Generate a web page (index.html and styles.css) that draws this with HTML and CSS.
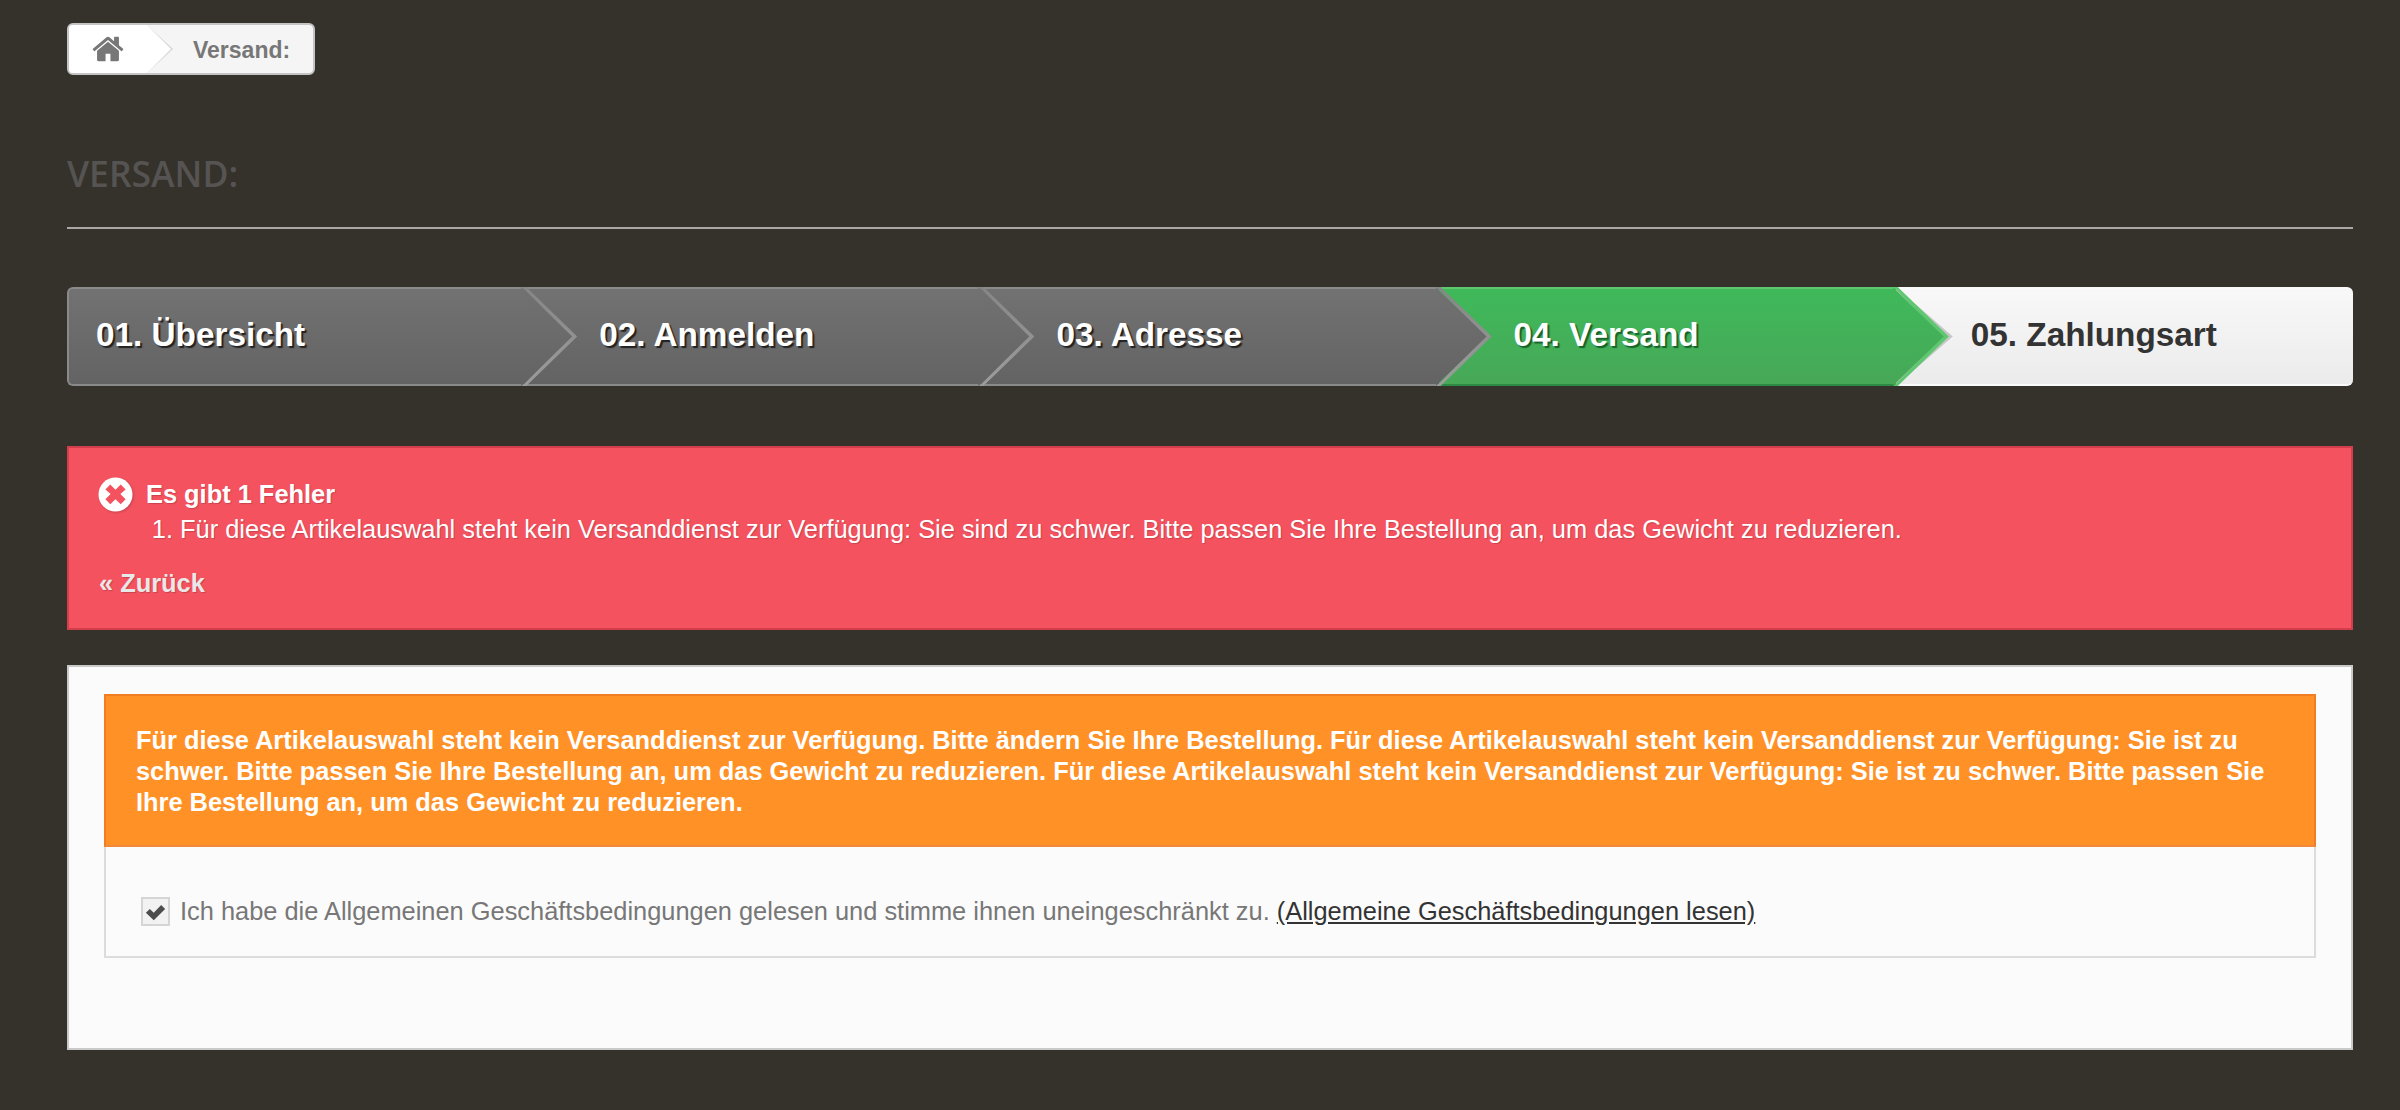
FILE: index.html
```html
<!DOCTYPE html>
<html lang="de">
<head>
<meta charset="utf-8">
<title>Versand</title>
<link rel="stylesheet" href="styles.css">
</head>
<body>
<main class="page">
  <nav class="crumb">
    <a class="crumb-home" href="#" aria-label="Start">
      <svg class="home-icon" viewBox="0 0 1792 1792"><path d="M1472 992v480q0 26-19 45t-45 19h-384v-384h-256v384h-384q-26 0-45-19t-19-45v-480q0-1 .5-3t.5-3l575-474 575 474q1 2 1 6zm223-69l-62 74q-8 9-21 11h-3q-13 0-21-7l-692-577-692 577q-12 8-24 7-13-2-21-11l-62-74q-8-10-7-23.500t11-21.500l719-599q32-26 76-26t76 26l244 204v-195q0-14 9-23t23-9h192q14 0 23 9t9 23v408l219 182q10 8 11 21.500t-7 23.500z"/></svg>
    </a>
    <span class="crumb-current">Versand:</span>
  </nav>

  <h1 class="title">VERSAND:</h1>

  <ol class="steps">
    <li class="step step-done step-first">01. Übersicht</li>
    <li class="step step-done step-second">02. Anmelden</li>
    <li class="step step-done step-third">03. Adresse</li>
    <li class="step step-current">04. Versand</li>
    <li class="step step-todo">05. Zahlungsart</li>
  </ol>

  <section class="alert">
    <div class="alert-head">
      <svg class="alert-icon" viewBox="0 0 36 36"><circle cx="18" cy="18" r="17.500" fill="#fff"/><path d="M12.600 7.800 18 13.200l5.400-5.400 5 5-5.400 4.800 5.400 5.400-5 5-5.400-5.200-5.400 5.200-5-5 5.400-5.400-5.400-4.800z" fill="#f4525f"/></svg>
      <strong>Es gibt 1 Fehler</strong>
    </div>
    <ol class="alert-list"><li>Für diese Artikelauswahl steht kein Versanddienst zur Verfügung: Sie sind zu schwer. Bitte passen Sie Ihre Bestellung an, um das Gewicht zu reduzieren.</li></ol>
    <a class="alert-back" href="#">« Zurück</a>
  </section>

  <section class="panel">
    <p class="warning">Für diese Artikelauswahl steht kein Versanddienst zur Verfügung. Bitte ändern Sie Ihre Bestellung. Für diese Artikelauswahl steht kein Versanddienst zur Verfügung: Sie ist zu schwer. Bitte passen Sie Ihre Bestellung an, um das Gewicht zu reduzieren. Für diese Artikelauswahl steht kein Versanddienst zur Verfügung: Sie ist zu schwer. Bitte passen Sie Ihre Bestellung an, um das Gewicht zu reduzieren.</p>
    <div class="terms">
      <span class="check">
        <svg class="check-icon" viewBox="0 0 24 24"><path d="M1 13.500 5.500 9l4.500 4.500L18.500 4.500l4.500 4.500L10 22z"/></svg>
      </span>
      <span class="terms-text">Ich habe die Allgemeinen Geschäftsbedingungen gelesen und stimme ihnen uneingeschränkt zu. <a class="terms-link" href="#">(Allgemeine Geschäftsbedingungen lesen)</a></span>
    </div>
  </section>
</main>
</body>
</html>
```

FILE: styles.css
```css
* { box-sizing: border-box; }

html, body {
  margin: 0;
  height: 100%;
  overflow: hidden;
}

body {
  background: #35312b;
  font-family: "Liberation Sans", Arial, sans-serif;
}

.page {
  padding: 23px 47px 0 67px;
}

/* Breadcrumb */
.crumb {
  display: flex;
  width: 248px;
  height: 52px;
  background: #f5f5f5;
  border: 2px solid #c4c4c4;
  border-radius: 6px;
  overflow: hidden;
}

.crumb-home {
  position: relative;
  display: flex;
  align-items: center;
  width: 79px;
  padding-left: 22px;
  background: #fff;
}

.crumb-home::before,
.crumb-home::after {
  content: "";
  position: absolute;
  top: 0;
  height: 100%;
  clip-path: polygon(0 0, 100% 50%, 0 100%);
}

.crumb-home::before {
  left: 78px;
  width: 26px;
  background: #d6d6d6;
}

.crumb-home::after {
  left: 78px;
  width: 24px;
  background: #fff;
}

.home-icon {
  width: 34px;
  height: 34px;
  fill: #777;
}

.crumb-current {
  margin-left: 45px;
  font-size: 23px;
  font-weight: 700;
  line-height: 50px;
  color: #777;
}

/* Title */
.title {
  margin: 74px 0 0;
  height: 80px;
  font-family: "Open Sans", sans-serif;
  font-size: 35.500px;
  font-weight: 600;
  line-height: 48px;
  color: #555452;
  border-bottom: 2px solid #a9a8a6;
}

/* Steps */
.steps {
  display: flex;
  margin: 58px 0 0;
  padding: 0;
  list-style: none;
}

.step {
  position: relative;
  flex: none;
  width: 20%;
  height: 99px;
  padding-left: 75px;
  font-size: 33.300px;
  font-weight: 700;
  line-height: 91px;
  border-top: 2px solid #8a8a8a;
  border-bottom: 2px solid #8a8a8a;
  white-space: nowrap;
}

.step-first {
  z-index: 5;
  padding-left: 27px;
  border-left: 2px solid #8a8a8a;
  border-radius: 6px 0 0 6px;
}

.step-second { z-index: 4; }
.step-third { z-index: 3; }

.step-done {
  color: #fff;
  background: linear-gradient(#727272, #636363);
  text-shadow: 2px 2px 1px #222;
}

.step-current {
  z-index: 2;
  color: #fff;
  background: linear-gradient(#3fb95a, #47a858);
  border-color: #5ec770;
  border-bottom-color: #2c8a44;
  text-shadow: 2px 2px 1px #17612b;
}

.step-todo {
  z-index: 1;
  color: #333;
  background: linear-gradient(#f8f8f8, #ebebeb);
  border-color: #fafafa;
  border-radius: 0 6px 6px 0;
}

/* Arrow: ::before draws the edge of the chevron, ::after its filling. */
.step-done::before,
.step-done::after,
.step-current::before,
.step-current::after {
  content: "";
  position: absolute;
  top: -2px;
  height: 99px;
}

.step-done::before,
.step-current::before {
  left: 100%;
  width: 55px;
  margin-left: -2px;
  clip-path: polygon(0 0, 4px 0, 100% 50%, 4px 100%, 0 100%, 49px 50%);
}

.step-done::after,
.step-current::after {
  left: 100%;
  width: 51px;
  margin-left: -3px;
  clip-path: polygon(0 0, 100% 50%, 0 100%);
}

.step-done::before {
  background: linear-gradient(#868686, #9c9c9c);
}

.step-done::after {
  background: linear-gradient(#727272, #636363);
}

.step-current::before {
  background: #5ec770;
}

.step-current::after {
  background: linear-gradient(#3fb95a, #47a858);
}

/* Grey edge that the green arrow leaves on the last step */
.step-todo::before {
  content: "";
  position: absolute;
  top: -2px;
  left: 0;
  width: 57px;
  height: 99px;
  background: #c6c6c6;
  clip-path: polygon(0 0, 100% 50%, 0 100%);
}

/* Error message */
.alert {
  height: 184px;
  margin-top: 60px;
  padding: 29px 30px 0;
  color: #fff;
  background: #f4525f;
  border: 2px solid #d23e4b;
  text-shadow: 1px 1px 1px rgba(0, 0, 0, .18);
}

.alert-head {
  display: flex;
  align-items: center;
  gap: 13px;
  height: 35px;
  font-size: 25.400px;
}

.alert-icon {
  flex: none;
  width: 35px;
  height: 35px;
  margin-left: -1px;
  filter: drop-shadow(1px 1px 1px rgba(0, 0, 0, .18));
}

.alert-list {
  margin: 0;
  padding: 0 0 0 81px;
  font-size: 25.400px;
  line-height: 35px;
}

.alert-back {
  display: block;
  margin-top: 19px;
  font-size: 25.400px;
  font-weight: 700;
  line-height: 35px;
  color: #e8e8e8;
  text-decoration: none;
}

/* Content panel */
.panel {
  height: 385px;
  margin-top: 35px;
  padding: 27px 35px 0;
  background: #fbfbfb;
  border: 2px solid #c9c9c9;
}

.warning {
  height: 153px;
  margin: 0;
  padding: 29px 30px 0;
  font-size: 25.400px;
  font-weight: 700;
  line-height: 31px;
  color: #fff;
  background: #ff9126;
  border: 2px solid #f37d22;
  border-bottom-color: #f08a3a;
}

.terms {
  display: flex;
  align-items: center;
  gap: 10px;
  height: 111px;
  padding: 20px 36px 0 35px;
  border: 2px solid #dcdcdc;
  border-top: 0;
}

.check {
  display: flex;
  align-items: center;
  justify-content: center;
  flex: none;
  width: 29px;
  height: 29px;
  background: #f2f2f2;
  border: 2px solid #d5d5d5;
}

.check-icon {
  width: 21px;
  height: 21px;
  fill: #4d4d4d;
}

.terms-text {
  font-size: 25.400px;
  color: #777;
}

.terms-link {
  color: #333;
  text-decoration: underline;
}
```
